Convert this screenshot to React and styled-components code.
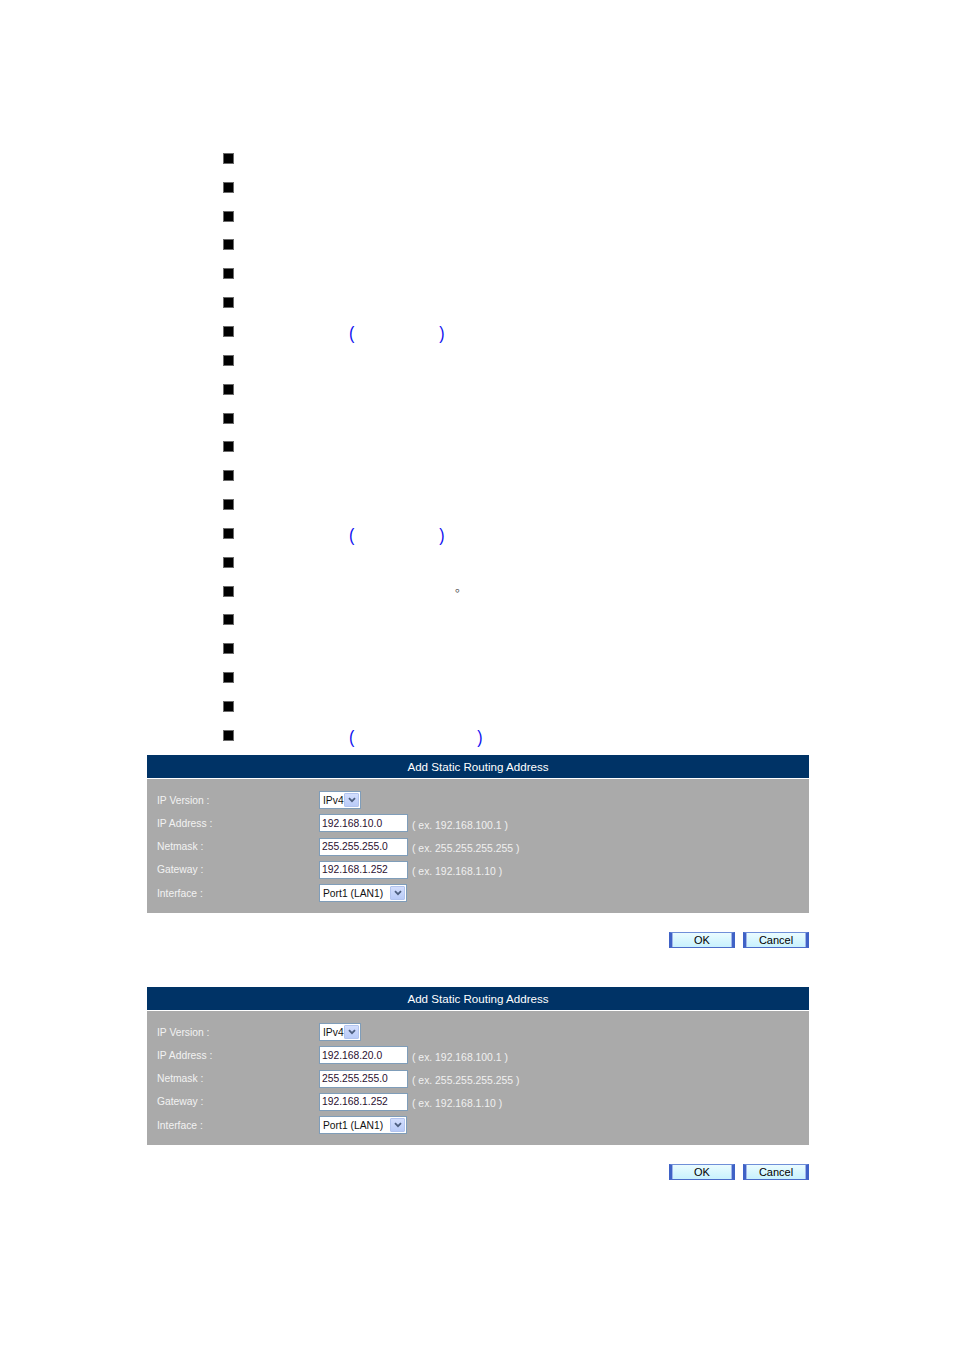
import styled, { createGlobalStyle } from "styled-components";

const GlobalStyle = createGlobalStyle`
  html, body {
    margin: 0;
    padding: 0;
    background: #ffffff;
  }
  body {
    font-family: "Liberation Sans", Arial, sans-serif;
  }
`;

const Page = styled.div`
  width: 954px;
  min-height: 1350px;
  padding-top: 144px;
  box-sizing: border-box;
`;

const BulletList = styled.ul`
  list-style: none;
  margin: 0;
  padding: 0 0 0 223px;
`;

const Item = styled.li`
  display: flex;
  align-items: center;
  height: 28.85px;
`;

const Bullet = styled.span`
  flex: none;
  width: 9px;
  height: 9px;
  background: #000000;
  border: 1px solid #6a6a6a;
`;

const Paren = styled.span`
  color: #1010f0;
  font-size: 16px;
  line-height: 16px;
  margin-left: ${({ $gap }) => $gap}px;
  transform: translateY(2px) scaleY(1.1);
`;

const Stop = styled.span`
  color: #555555;
  font-family: "Noto Sans CJK SC", sans-serif;
  font-size: 12px;
  line-height: 12px;
  margin-left: ${({ $gap }) => $gap}px;
  transform: translateY(-4px);
`;

const Panel = styled.section`
  margin: ${({ $top }) => $top}px 0 0 147px;
  width: 662px;
`;

const Header = styled.div`
  height: 23px;
  background: #003366;
  border-bottom: 1px solid #ffffff;
  color: #ffffff;
  font-size: 11.6px;
  display: flex;
  align-items: center;
  justify-content: center;
`;

const Body = styled.div`
  background: #aaaaaa;
  padding: 12.5px 10px 10.5px;
  display: flex;
  flex-direction: column;
  gap: 5.25px;
`;

const Row = styled.div`
  display: grid;
  grid-template-columns: 162px auto;
  align-items: center;
  height: 18px;
`;

const Label = styled.span`
  color: #f2f2f2;
  font-size: 10.3px;
`;

const Field = styled.div`
  display: flex;
  align-items: center;
  gap: 4px;
`;

const TextBox = styled.div`
  width: 89px;
  height: 18px;
  box-sizing: border-box;
  background: #ffffff;
  border: 1px solid #7f9db9;
  color: #2a0f30;
  font-size: 10.3px;
  padding: 0 2px;
  display: flex;
  align-items: center;
`;

const Hint = styled.span`
  color: #f0f0f0;
  font-size: 10.4px;
  padding-top: 4px;
`;

const Select = styled.div`
  width: ${({ $w }) => $w}px;
  height: 18px;
  box-sizing: border-box;
  background: #ffffff;
  border: 1px solid #7f9db9;
  display: flex;
  align-items: center;
  justify-content: space-between;
  padding: 0 1px 0 3px;
  color: #111111;
  font-size: 10.3px;
`;

const DropButton = styled.span`
  width: 15px;
  height: 14px;
  box-sizing: border-box;
  background: linear-gradient(#d3defd, #b9cbf8);
  border: 1px solid #b2c4ef;
  border-radius: 1px;
  display: flex;
  align-items: center;
  justify-content: center;
`;

const Actions = styled.div`
  display: flex;
  justify-content: flex-end;
  gap: 8px;
  margin-top: 19px;
`;

const Button = styled.button`
  width: 66px;
  height: 16px;
  padding: 0;
  box-sizing: border-box;
  font-family: "Liberation Sans", Arial, sans-serif;
  font-size: 11px;
  line-height: 12px;
  color: #000000;
  background: linear-gradient(#eafcff, #c8f1fd);
  border-top: 1px solid #6f8fd8;
  border-bottom: 1px solid #4a6cc8;
  border-left: 3px solid #3f62c6;
  border-right: 3px solid #3f62c6;
  box-shadow: inset 1px 0 0 #9fb5ea, inset -1px 0 0 #9fb5ea;
`;

const Chevron = () => (
  <svg width="8" height="6" viewBox="0 0 8 6">
    <path d="M1 1.2 L4 4.2 L7 1.2" fill="none" stroke="#4d5f80" strokeWidth="1.8" />
  </svg>
);

const marks = {
  6: [{ kind: "paren", text: "(", gap: 115 }, { kind: "paren", text: ")", gap: 85 }],
  13: [{ kind: "paren", text: "(", gap: 115 }, { kind: "paren", text: ")", gap: 85 }],
  15: [{ kind: "stop", text: "。", gap: 221 }],
  20: [{ kind: "paren", text: "(", gap: 115 }, { kind: "paren", text: ")", gap: 123 }],
};

function RoutingPanel({ top, address }) {
  return (
    <Panel $top={top}>
      <Header>Add Static Routing Address</Header>
      <Body>
        <Row>
          <Label>IP Version :</Label>
          <Field>
            <Select $w={42}>
              IPv4
              <DropButton>
                <Chevron />
              </DropButton>
            </Select>
          </Field>
        </Row>
        <Row>
          <Label>IP Address :</Label>
          <Field>
            <TextBox>{address}</TextBox>
            <Hint>( ex. 192.168.100.1 )</Hint>
          </Field>
        </Row>
        <Row>
          <Label>Netmask :</Label>
          <Field>
            <TextBox>255.255.255.0</TextBox>
            <Hint>( ex. 255.255.255.255 )</Hint>
          </Field>
        </Row>
        <Row>
          <Label>Gateway :</Label>
          <Field>
            <TextBox>192.168.1.252</TextBox>
            <Hint>( ex. 192.168.1.10 )</Hint>
          </Field>
        </Row>
        <Row>
          <Label>Interface :</Label>
          <Field>
            <Select $w={88}>
              Port1 (LAN1)
              <DropButton>
                <Chevron />
              </DropButton>
            </Select>
          </Field>
        </Row>
      </Body>
      <Actions>
        <Button>OK</Button>
        <Button>Cancel</Button>
      </Actions>
    </Panel>
  );
}

export default function App() {
  return (
    <Page>
      <GlobalStyle />
      <BulletList>
        {Array.from({ length: 21 }, (_, i) => (
          <Item key={i}>
            <Bullet />
            {(marks[i] || []).map((m, j) =>
              m.kind === "paren" ? (
                <Paren key={j} $gap={m.gap}>
                  {m.text}
                </Paren>
              ) : (
                <Stop key={j} $gap={m.gap}>
                  {m.text}
                </Stop>
              )
            )}
          </Item>
        ))}
      </BulletList>
      <RoutingPanel top={5} address="192.168.10.0" />
      <RoutingPanel top={39} address="192.168.20.0" />
    </Page>
  );
}
